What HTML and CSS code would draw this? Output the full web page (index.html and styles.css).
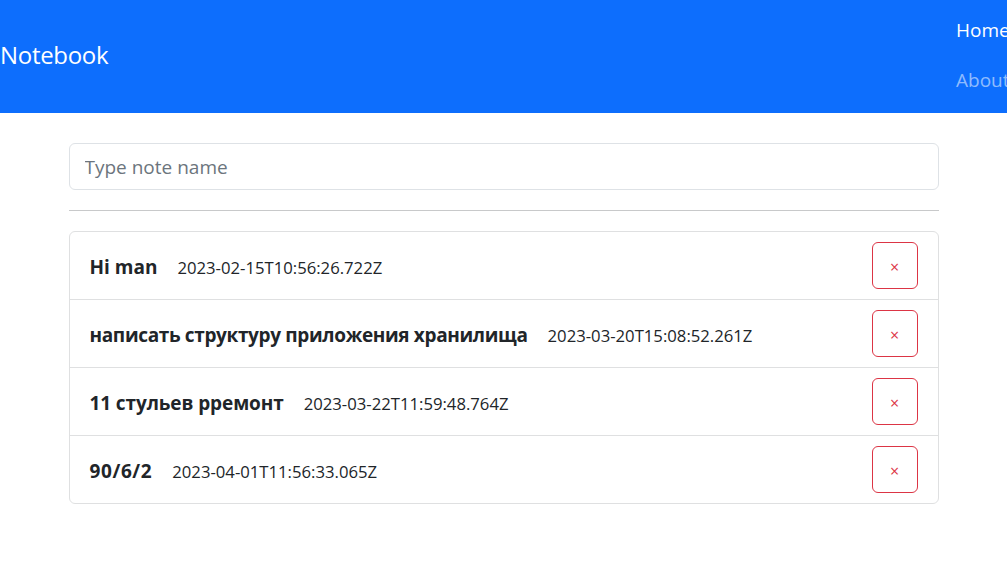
FILE: index.html
```html
<!DOCTYPE html>
<html lang="en">
<head>
<meta charset="utf-8">
<title>Notebook</title>
<link rel="stylesheet" href="styles.css">
</head>
<body>
<nav class="navbar">
  <a class="brand" href="#">Notebook</a>
  <ul class="nav-links">
    <li><a class="nav-link active" href="#">Home</a></li>
    <li><a class="nav-link" href="#">About</a></li>
  </ul>
</nav>
<main class="container">
  <input class="form-control" type="text" placeholder="Type note name">
  <hr class="divider">
  <ul class="list-group">
    <li class="list-item">
      <div class="note"><span class="note-title">Hi man</span><span class="note-date">2023-02-15T10:56:26.722Z</span></div>
      <button class="btn-delete" type="button">×</button>
    </li>
    <li class="list-item">
      <div class="note"><span class="note-title cyr">написать структуру приложения хранилища</span><span class="note-date">2023-03-20T15:08:52.261Z</span></div>
      <button class="btn-delete" type="button">×</button>
    </li>
    <li class="list-item">
      <div class="note"><span class="note-title mixed">11 стульев рремонт</span><span class="note-date">2023-03-22T11:59:48.764Z</span></div>
      <button class="btn-delete" type="button">×</button>
    </li>
    <li class="list-item">
      <div class="note"><span class="note-title num">90/6/2</span><span class="note-date">2023-04-01T11:56:33.065Z</span></div>
      <button class="btn-delete" type="button">×</button>
    </li>
  </ul>
</main>
</body>
</html>
```

FILE: styles.css
```css
* { box-sizing: border-box; }

html, body {
  margin: 0;
  padding: 0;
  overflow: hidden;
}

body {
  font-family: "Open Sans", "Noto Sans", sans-serif;
  font-size: 20px;
  line-height: 1.5;
  color: #212529;
  background: #fff;
}

.navbar {
  height: 113px;
  background: #0d6efd;
  display: flex;
  align-items: center;
  overflow: hidden;
}

.brand {
  color: #fff;
  text-decoration: none;
  font-size: 24px;
  line-height: 1.5;
  letter-spacing: -0.3px;
  margin-top: -3px;
}

.nav-links {
  list-style: none;
  margin: -4px 0 0 auto;
  padding: 0;
  width: 51px;
  display: flex;
  flex-direction: column;
  white-space: nowrap;
}

.nav-link {
  display: block;
  padding: 10px 0;
  line-height: 30px;
  font-size: 19px;
  color: rgba(255, 255, 255, 0.55);
  text-decoration: none;
}

.nav-link.active {
  color: #fff;
}

.container {
  width: 870px;
  margin: 30px auto 0;
}

.form-control {
  display: block;
  width: 100%;
  height: 47px;
  padding: 1px 15px 0;
  font-family: inherit;
  font-size: 19px;
  color: #212529;
  border: 1px solid #dee2e6;
  border-radius: 6px;
  outline: none;
}

.form-control::placeholder {
  color: #6c757d;
}

.divider {
  margin: 20px 0;
  border: 0;
  border-top: 1px solid #c8c9ca;
}

.list-group {
  list-style: none;
  margin: 0;
  padding: 0;
  border: 1px solid #dfe0e1;
  border-radius: 6px;
}

.list-item {
  display: flex;
  align-items: center;
  justify-content: space-between;
  padding: 10px 20px;
  border-top: 1px solid #dfe0e1;
}

.list-item:first-child {
  border-top: 0;
}

.note {
  display: flex;
  align-items: baseline;
  gap: 20px;
  padding-top: 3px;
}

.note-title {
  font-weight: 700;
  font-size: 19px;
}

.note-title.cyr {
  letter-spacing: -0.35px;
}

.note-title.mixed {
  letter-spacing: -0.1px;
}

.note-title.num {
  letter-spacing: 0.6px;
}

.note-date {
  font-size: 16.7px;
}

.btn-delete {
  width: 46px;
  height: 47px;
  padding: 2px 0 0;
  background: #fff;
  color: #dc3545;
  border: 1px solid #dc3545;
  border-radius: 6px;
  font-family: inherit;
  font-size: 16px;
  line-height: 1;
  cursor: pointer;
}
```
